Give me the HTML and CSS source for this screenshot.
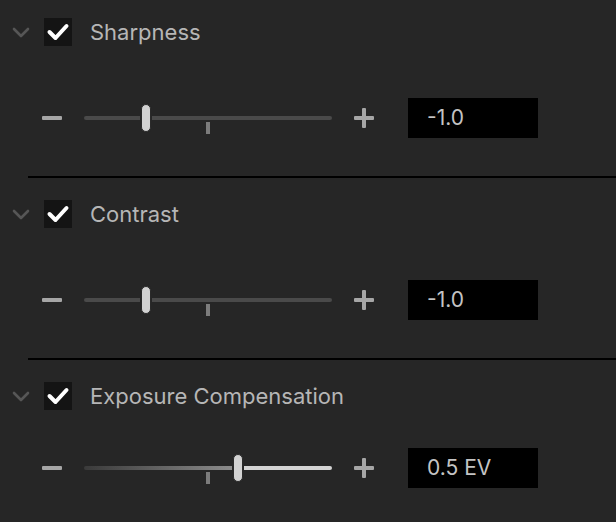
FILE: index.html
```html
<!DOCTYPE html>
<html>
<head>
<meta charset="utf-8">
<link rel="stylesheet" href="styles.css">
</head>
<body>
<div class="panel">
  <section class="section">
    <div class="header">
      <svg class="chevron" width="18" height="12" viewBox="0 0 18 12"><polyline points="2,3 9,10 16,3" fill="none" stroke="#565656" stroke-width="2.6" stroke-linecap="round" stroke-linejoin="round"/></svg>
      <span class="check"><svg width="28" height="28" viewBox="0 0 28 28"><polyline points="5.5,14 11.5,20 22.5,8" fill="none" stroke="#fff" stroke-width="4" stroke-linecap="round" stroke-linejoin="round"/></svg></span>
      <span class="title">Sharpness</span>
    </div>
    <div class="slider-row">
      <span class="minus"></span>
      <div class="track">
        <span class="tick"></span>
        <span class="thumb" style="left:57px"></span>
      </div>
      <span class="plus"></span>
      <div class="value">-1.0</div>
    </div>
  </section>
  <div class="sep"></div>
  <section class="section">
    <div class="header">
      <svg class="chevron" width="18" height="12" viewBox="0 0 18 12"><polyline points="2,3 9,10 16,3" fill="none" stroke="#565656" stroke-width="2.6" stroke-linecap="round" stroke-linejoin="round"/></svg>
      <span class="check"><svg width="28" height="28" viewBox="0 0 28 28"><polyline points="5.5,14 11.5,20 22.5,8" fill="none" stroke="#fff" stroke-width="4" stroke-linecap="round" stroke-linejoin="round"/></svg></span>
      <span class="title">Contrast</span>
    </div>
    <div class="slider-row">
      <span class="minus"></span>
      <div class="track">
        <span class="tick"></span>
        <span class="thumb" style="left:57px"></span>
      </div>
      <span class="plus"></span>
      <div class="value">-1.0</div>
    </div>
  </section>
  <div class="sep"></div>
  <section class="section last">
    <div class="header">
      <svg class="chevron" width="18" height="12" viewBox="0 0 18 12"><polyline points="2,3 9,10 16,3" fill="none" stroke="#565656" stroke-width="2.6" stroke-linecap="round" stroke-linejoin="round"/></svg>
      <span class="check"><svg width="28" height="28" viewBox="0 0 28 28"><polyline points="5.5,14 11.5,20 22.5,8" fill="none" stroke="#fff" stroke-width="4" stroke-linecap="round" stroke-linejoin="round"/></svg></span>
      <span class="title">Exposure Compensation</span>
    </div>
    <div class="slider-row">
      <span class="minus"></span>
      <div class="track ev">
        <span class="tick"></span>
        <span class="thumb" style="left:149px"></span>
      </div>
      <span class="plus"></span>
      <div class="value">0.5 EV</div>
    </div>
  </section>
</div>
</body>
</html>
```

FILE: styles.css
```css
html, body {
  margin: 0;
  padding: 0;
  background: #262626;
}
body {
  font-family: Inter, "Liberation Sans", sans-serif;
  width: 616px;
  height: 522px;
  overflow: hidden;
}
.panel {
  display: flex;
  flex-direction: column;
}
.section {
  padding: 18px 0 38px 0;
  display: flex;
  flex-direction: column;
  gap: 52px;
}
.section.last {
  gap: 38px;
}
.header {
  display: flex;
  align-items: center;
  height: 28px;
  padding-left: 12px;
}
.chevron {
  display: block;
  margin-right: 14px;
}
.check {
  width: 28px;
  height: 28px;
  background: #141414;
  display: block;
  margin-right: 18px;
}
.check svg {
  display: block;
}
.title {
  color: #b6b6b6;
  font-size: 22px;
  line-height: 28px;
}
.slider-row {
  display: flex;
  align-items: center;
  height: 40px;
  padding-left: 42px;
}
.minus {
  width: 20px;
  height: 4px;
  background: #a6a6a6;
  border-radius: 1px;
  margin-right: 22px;
}
.track {
  position: relative;
  width: 248px;
  height: 4px;
  background: #4a4a4a;
  border-radius: 2px;
  margin-right: 22px;
}
.track.ev {
  background: linear-gradient(to right, #3a3a3a 0px, #8c8c8c 150px, #d4d4d4 155px, #d4d4d4 100%);
}
.tick {
  position: absolute;
  left: 122px;
  top: 6px;
  width: 4px;
  height: 12px;
  background: #7c7c7c;
}
.thumb {
  position: absolute;
  top: -12px;
  width: 10px;
  height: 28px;
  box-sizing: border-box;
  background: #d2d2d2;
  border: 1px solid #2a2a2a;
  border-radius: 5px;
  box-shadow: 0 0 0 1px #262626;
}
.plus {
  position: relative;
  width: 20px;
  height: 20px;
  margin-right: 34px;
}
.plus::before, .plus::after {
  content: "";
  position: absolute;
  background: #a6a6a6;
  border-radius: 1px;
}
.plus::before {
  left: 0;
  top: 8px;
  width: 20px;
  height: 4px;
}
.plus::after {
  left: 8px;
  top: 0;
  width: 4px;
  height: 20px;
}
.value {
  width: 130px;
  height: 40px;
  background: #000;
  color: #c4c4c4;
  font-size: 21px;
  line-height: 40px;
  padding-left: 19px;
  box-sizing: border-box;
}
.sep {
  height: 2px;
  background: #000;
  margin-left: 28px;
  margin-bottom: 4px;
}
```
